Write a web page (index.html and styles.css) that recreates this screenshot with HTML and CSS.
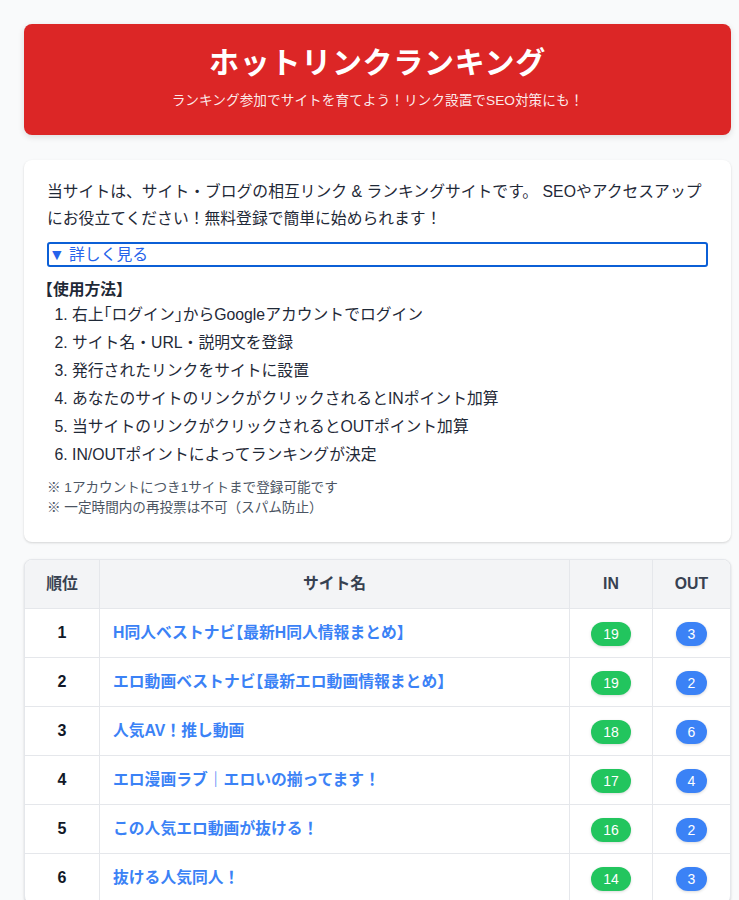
FILE: index.html
```html
<!DOCTYPE html>
<html lang="ja">
<head>
<meta charset="utf-8">
<title>ホットリンクランキング</title>
<link rel="stylesheet" href="styles.css">
</head>
<body>
<div class="page">
  <header class="hero">
    <h1 class="hero-title">ホットリンクランキング</h1>
    <p class="hero-sub">ランキング参加でサイトを育てよう！リンク設置でSEO対策にも！</p>
  </header>

  <section class="card info">
    <p class="intro">当サイトは、サイト・ブログの相互リンク &amp; ランキングサイトです。 SEOやアクセスアップにお役立てください！無料登録で簡単に始められます！</p>
    <details class="more" open>
      <summary class="more-summary">詳しく見る</summary>
      <div class="more-body">
        <strong class="usage-title">【使用方法】</strong>
        <ol class="usage-list">
          <li>右上<span class="half">「</span>ログイン<span class="half">」</span>からGoogleアカウントでログイン</li>
          <li>サイト名・URL・説明文を登録</li>
          <li>発行されたリンクをサイトに設置</li>
          <li>あなたのサイトのリンクがクリックされるとINポイント加算</li>
          <li>当サイトのリンクがクリックされるとOUTポイント加算</li>
          <li>IN/OUTポイントによってランキングが決定</li>
        </ol>
        <p class="notes">※ 1アカウントにつき1サイトまで登録可能です<br>※ 一定時間内の再投票は不可（スパム防止）</p>
      </div>
    </details>
  </section>

  <section class="card table-card">
    <table class="ranking">
      <colgroup>
        <col class="col-rank">
        <col class="col-name">
        <col class="col-in">
        <col class="col-out">
      </colgroup>
      <thead>
        <tr><th>順位</th><th>サイト名</th><th>IN</th><th>OUT</th></tr>
      </thead>
      <tbody>
        <tr><td class="rank">1</td><td class="name"><a href="#">H同人ベストナビ<span class="half">【</span>最新H同人情報まとめ<span class="half">】</span></a></td><td class="num"><span class="badge in">19</span></td><td class="num"><span class="badge out">3</span></td></tr>
        <tr><td class="rank">2</td><td class="name"><a href="#">エロ動画ベストナビ<span class="half">【</span>最新エロ動画情報まとめ<span class="half">】</span></a></td><td class="num"><span class="badge in">19</span></td><td class="num"><span class="badge out">2</span></td></tr>
        <tr><td class="rank">3</td><td class="name"><a href="#">人気AV！推し動画</a></td><td class="num"><span class="badge in">18</span></td><td class="num"><span class="badge out">6</span></td></tr>
        <tr><td class="rank">4</td><td class="name"><a href="#">エロ漫画ラブ｜エロいの揃ってます！</a></td><td class="num"><span class="badge in">17</span></td><td class="num"><span class="badge out">4</span></td></tr>
        <tr><td class="rank">5</td><td class="name"><a href="#">この人気エロ動画が抜ける！</a></td><td class="num"><span class="badge in">16</span></td><td class="num"><span class="badge out">2</span></td></tr>
        <tr><td class="rank">6</td><td class="name"><a href="#">抜ける人気同人！</a></td><td class="num"><span class="badge in">14</span></td><td class="num"><span class="badge out">3</span></td></tr>
      </tbody>
    </table>
  </section>
</div>
</body>
</html>
```

FILE: styles.css
```css
* { box-sizing: border-box; }

html, body {
  margin: 0;
  padding: 0;
  background: #f9fafb;
}

body {
  font-family: "Liberation Sans", "Noto Sans CJK JP", sans-serif;
  font-size: 15.8px;
  color: #1f2937;
}

.page {
  padding: 24px 8px 24px 24px;
}

.hero {
  background: #dc2626;
  border-radius: 8px;
  padding: 21px 24px 24px;
  text-align: center;
  color: #ffffff;
  box-shadow: 0 2px 6px rgba(0, 0, 0, 0.12);
}

.hero-title {
  margin: 0;
  font-size: 30px;
  line-height: 36px;
  font-weight: 700;
  letter-spacing: 0.7px;
}

.hero-sub {
  margin: 10px 0 0;
  font-size: 13.7px;
  line-height: 20px;
  color: rgba(255, 255, 255, 0.92);
}

.card {
  background: #ffffff;
  border-radius: 8px;
  box-shadow: 0 1px 3px rgba(0, 0, 0, 0.1), 0 1px 2px rgba(0, 0, 0, 0.06);
}

.info {
  margin-top: 25px;
  padding: 18px 23px 24px;
}

.intro {
  margin: 0 0 10px;
  line-height: 27px;
  color: #1f2937;
}

.more-summary {
  list-style: none;
  display: block;
  border: 2px solid #0b5fd6;
  border-radius: 3px;
  line-height: 21px;
  color: #2563eb;
  cursor: pointer;
}

.more-summary::-webkit-details-marker { display: none; }

.more-summary::before {
  content: "▶ ";
}

.more[open] .more-summary::before {
  content: "▼ ";
}

.more-body {
  padding-top: 12px;
}

.usage-title {
  display: block;
  line-height: 22px;
  font-weight: 700;
  color: #1f2937;
  text-spacing-trim: trim-start;
  margin-left: -2px;
}

.usage-list {
  margin: 0;
  padding-left: 25px;
  line-height: 28px;
  color: #1f2937;
}

.half {
  font-feature-settings: "halt";
}

.notes {
  margin: 9px 0 0;
  font-size: 13.6px;
  line-height: 20px;
  color: #4b5563;
}

.table-card {
  margin-top: 17px;
  border: 1px solid #e5e7eb;
  overflow: hidden;
}

.ranking {
  width: 100%;
  border-collapse: separate;
  border-spacing: 0;
  table-layout: fixed;
}

.col-rank { width: 74px; }
.col-in { width: 83px; }
.col-out { width: 78px; }

.ranking th,
.ranking td {
  padding: 0;
  line-height: 48px;
  border-bottom: 1px solid #e5e7eb;
  border-left: 1px solid #e5e7eb;
  text-align: center;
}

.ranking th:first-child,
.ranking td:first-child {
  border-left: 0;
}

.ranking th {
  background: #f3f4f6;
  font-weight: 700;
  color: #374151;
}

.ranking td.rank {
  font-weight: 700;
  font-size: 16px;
  color: #111827;
}

.ranking td.name {
  text-align: left;
  padding: 0 13px;
  white-space: nowrap;
  overflow: hidden;
}

.ranking td.name a {
  color: #3b82f6;
  font-weight: 700;
  text-decoration: none;
}

.badge {
  display: inline-block;
  vertical-align: middle;
  line-height: 24px;
  padding: 0 12px;
  border-radius: 12px;
  font-size: 14px;
  font-weight: 400;
  color: #ffffff;
  box-shadow: 0 1px 3px rgba(0, 0, 0, 0.15);
}

.badge.in { background: #22c55e; }
.badge.out { background: #3b82f6; }
```
